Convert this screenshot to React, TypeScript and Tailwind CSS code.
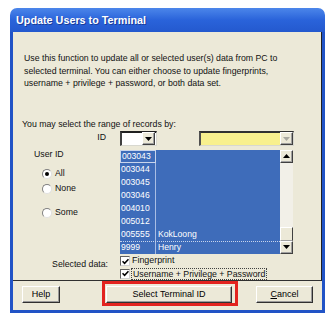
import React from "react";

const ids = [
  ["003043", ""],
  ["003044", ""],
  ["003045", ""],
  ["003046", ""],
  ["004010", ""],
  ["005012", ""],
  ["005555", "KokLoong"],
  ["9999", "Henry"],
];

function Arrow({ disabled = false, up = false }: { disabled?: boolean; up?: boolean }) {
  return (
    <svg width="7" height="4" viewBox="0 0 7 4">
      <path
        d={up ? "M0 4 L7 4 L3.5 0 Z" : "M0 0 L7 0 L3.5 4 Z"}
        fill={disabled ? "#A8A8A0" : "#000"}
      />
    </svg>
  );
}

function SmallBtn({ children }: { children: React.ReactNode }) {
  return (
    <div className="w-[13px] h-[13px] bg-[#ECE9D8] border-t border-l border-t-white border-l-white border-r border-b border-r-[#404040] border-b-[#404040] flex items-center justify-center shadow-[inset_-1px_-1px_0_#A0A0A0]">
      {children}
    </div>
  );
}

function Radio({ checked }: { checked?: boolean }) {
  return (
    <div className="w-[10px] h-[10px] rounded-full bg-white border border-t-[#808080] border-l-[#808080] border-r-[#E0E0E0] border-b-[#E0E0E0] flex items-center justify-center">
      {checked && <div className="w-[4px] h-[4px] rounded-full bg-black" />}
    </div>
  );
}

function Check() {
  return (
    <div className="w-[10px] h-[10px] bg-white border border-t-[#606060] border-l-[#606060] border-r-[#D0D0D0] border-b-[#D0D0D0] flex items-center justify-center">
      <svg width="7" height="7" viewBox="0 0 7 7">
        <path d="M0.5 3.2 L2.6 5.4 L6.5 1.2" stroke="#000" strokeWidth="1.6" fill="none" />
      </svg>
    </div>
  );
}

function Btn({ children, w }: { children: React.ReactNode; w: string }) {
  return (
    <div
      className={`${w} h-[17px] bg-[#ECE9D8] border-t border-l border-t-white border-l-white border-r border-b border-r-[#303030] border-b-[#303030] shadow-[inset_-1px_-1px_0_#9A9A9A] flex items-center justify-center text-[9px] text-black`}
    >
      {children}
    </div>
  );
}

export default function App() {
  return (
    <div className="w-[336px] h-[324px] bg-white pt-[8px] pl-[10px] font-['Liberation_Sans',Arial,sans-serif] text-[8.75px] text-[#111]">
      <div className="w-[315px] h-[305px] flex flex-col">
        <div className="h-[24px] rounded-t-[7px] bg-gradient-to-b from-[#4C86EA] via-[#2A63DA] to-[#2459CE] pl-[6px] flex items-center">
          <span className="text-white font-bold text-[10.8px] [text-shadow:1px_1px_0_#1A3C9A]">
            Update Users to Terminal
          </span>
        </div>
        <div className="flex-1 border-x-[3px] border-b-[3px] border-[#2153C6] bg-[#ECE9D8] flex flex-col">
          <div className="h-[249px] border-b border-[#303030] border-r border-r-[#202020] flex flex-col">
            <p className="pl-[11px] pt-[20px] leading-[12.5px] text-[8.75px]">
              Use this function to update all or selected user(s) data from PC to
              <br />
              selected terminal. You can either choose to update fingerprints,
              <br />
              username + privilege + password, or both data set.
            </p>
            <div className="pl-[9px] mt-[28px] leading-[12px]">You may select the range of records by:</div>
            {/* ID row */}
            <div className="flex mt-[1px] h-[15px]">
              <div className="w-[107px] flex items-center justify-end pr-[14px]">ID</div>
              <div className="w-[37px] h-[15px] bg-white border-t-2 border-l-2 border-t-[#202020] border-l-[#404040] border-r border-b border-r-[#D8D8D0] border-b-[#D8D8D0] flex justify-end items-center pr-[1px]">
                <SmallBtn>
                  <Arrow />
                </SmallBtn>
              </div>
              <div className="ml-[42px] w-[95px] h-[15px] bg-[#F8F08E] border-t-2 border-l-2 border-t-[#303030] border-l-[#505050] border-r border-b border-r-[#D8D8D0] border-b-[#D8D8D0] flex justify-end items-center">
                <SmallBtn>
                  <Arrow disabled />
                </SmallBtn>
              </div>
            </div>
            {/* list row */}
            <div className="flex mt-[4px]">
              <div className="w-[107px] flex flex-col">
                <div className="pl-[21px] -mt-[2px] leading-[12px]">User ID</div>
                <div className="pl-[29px] mt-[8px] flex items-center gap-[3px] h-[12px]">
                  <Radio checked />
                  <span>All</span>
                </div>
                <div className="pl-[29px] mt-[3px] flex items-center gap-[3px] h-[12px]">
                  <Radio />
                  <span>None</span>
                </div>
                <div className="pl-[29px] mt-[12px] flex items-center gap-[3px] h-[12px]">
                  <Radio />
                  <span>Some</span>
                </div>
              </div>
              <div className="w-[173px] h-[104px] flex">
                <div className="w-[160px] bg-[#3E6CBA] flex flex-col text-white text-[8.6px]">
                  {ids.map(([id, name], i) => (
                    <div
                      key={id}
                      className={`h-[13px] flex items-center ${i === 7 ? "border-t border-dotted border-[#C8D4EC]" : ""}`}
                    >
                      <div className={`w-[36px] h-full flex items-center pl-[1px] border-r border-[#A8BDE4] ${i === 0 ? "border border-[#C8D4EC]" : ""}`}>
                        {id}
                      </div>
                      <div className="pl-[2px]">{name}</div>
                    </div>
                  ))}
                </div>
                <div className="w-[13px] flex flex-col bg-[#F2F0E8]">
                  <SmallBtn>
                    <Arrow up />
                  </SmallBtn>
                  <div className="flex-1" />
                  <div className="h-[14px] bg-[#ECE9D8] border-t border-l border-t-white border-l-white border-r border-b border-r-[#404040] border-b-[#A0A0A0]" />
                  <SmallBtn>
                    <Arrow />
                  </SmallBtn>
                </div>
              </div>
            </div>
            {/* selected data */}
            <div className="flex mt-[2px]">
              <div className="w-[107px] flex justify-end pr-[12px] pt-[2px] leading-[12px]">Selected data:</div>
              <div className="flex flex-col">
                <div className="flex items-center gap-[2px] h-[11px]">
                  <Check />
                  <span className="text-[8.9px]">Fingerprint</span>
                </div>
                <div className="flex items-center gap-[1px] h-[12px] mt-[1px]">
                  <Check />
                  <span className="text-[8.75px] border border-dotted border-[#404040] px-[1px] leading-[10px]">
                    Username + Privilege + Password
                  </span>
                </div>
              </div>
            </div>
          </div>
          {/* buttons */}
          <div className="flex-1 flex items-start">
            <div className="ml-[9px] mt-[5px]">
              <Btn w="w-[38px]">Help</Btn>
            </div>
            <div className="ml-[42px] w-[136px] h-[25px] border-[3px] border-[#E2231F] pl-[1px] pt-[2px]">
              <Btn w="w-[126px]">Select Terminal ID</Btn>
            </div>
            <div className="ml-[18px] mt-[5px]">
              <Btn w="w-[57px]">
                <span>
                  <span className="underline">C</span>ancel
                </span>
              </Btn>
            </div>
          </div>
        </div>
      </div>
    </div>
  );
}
